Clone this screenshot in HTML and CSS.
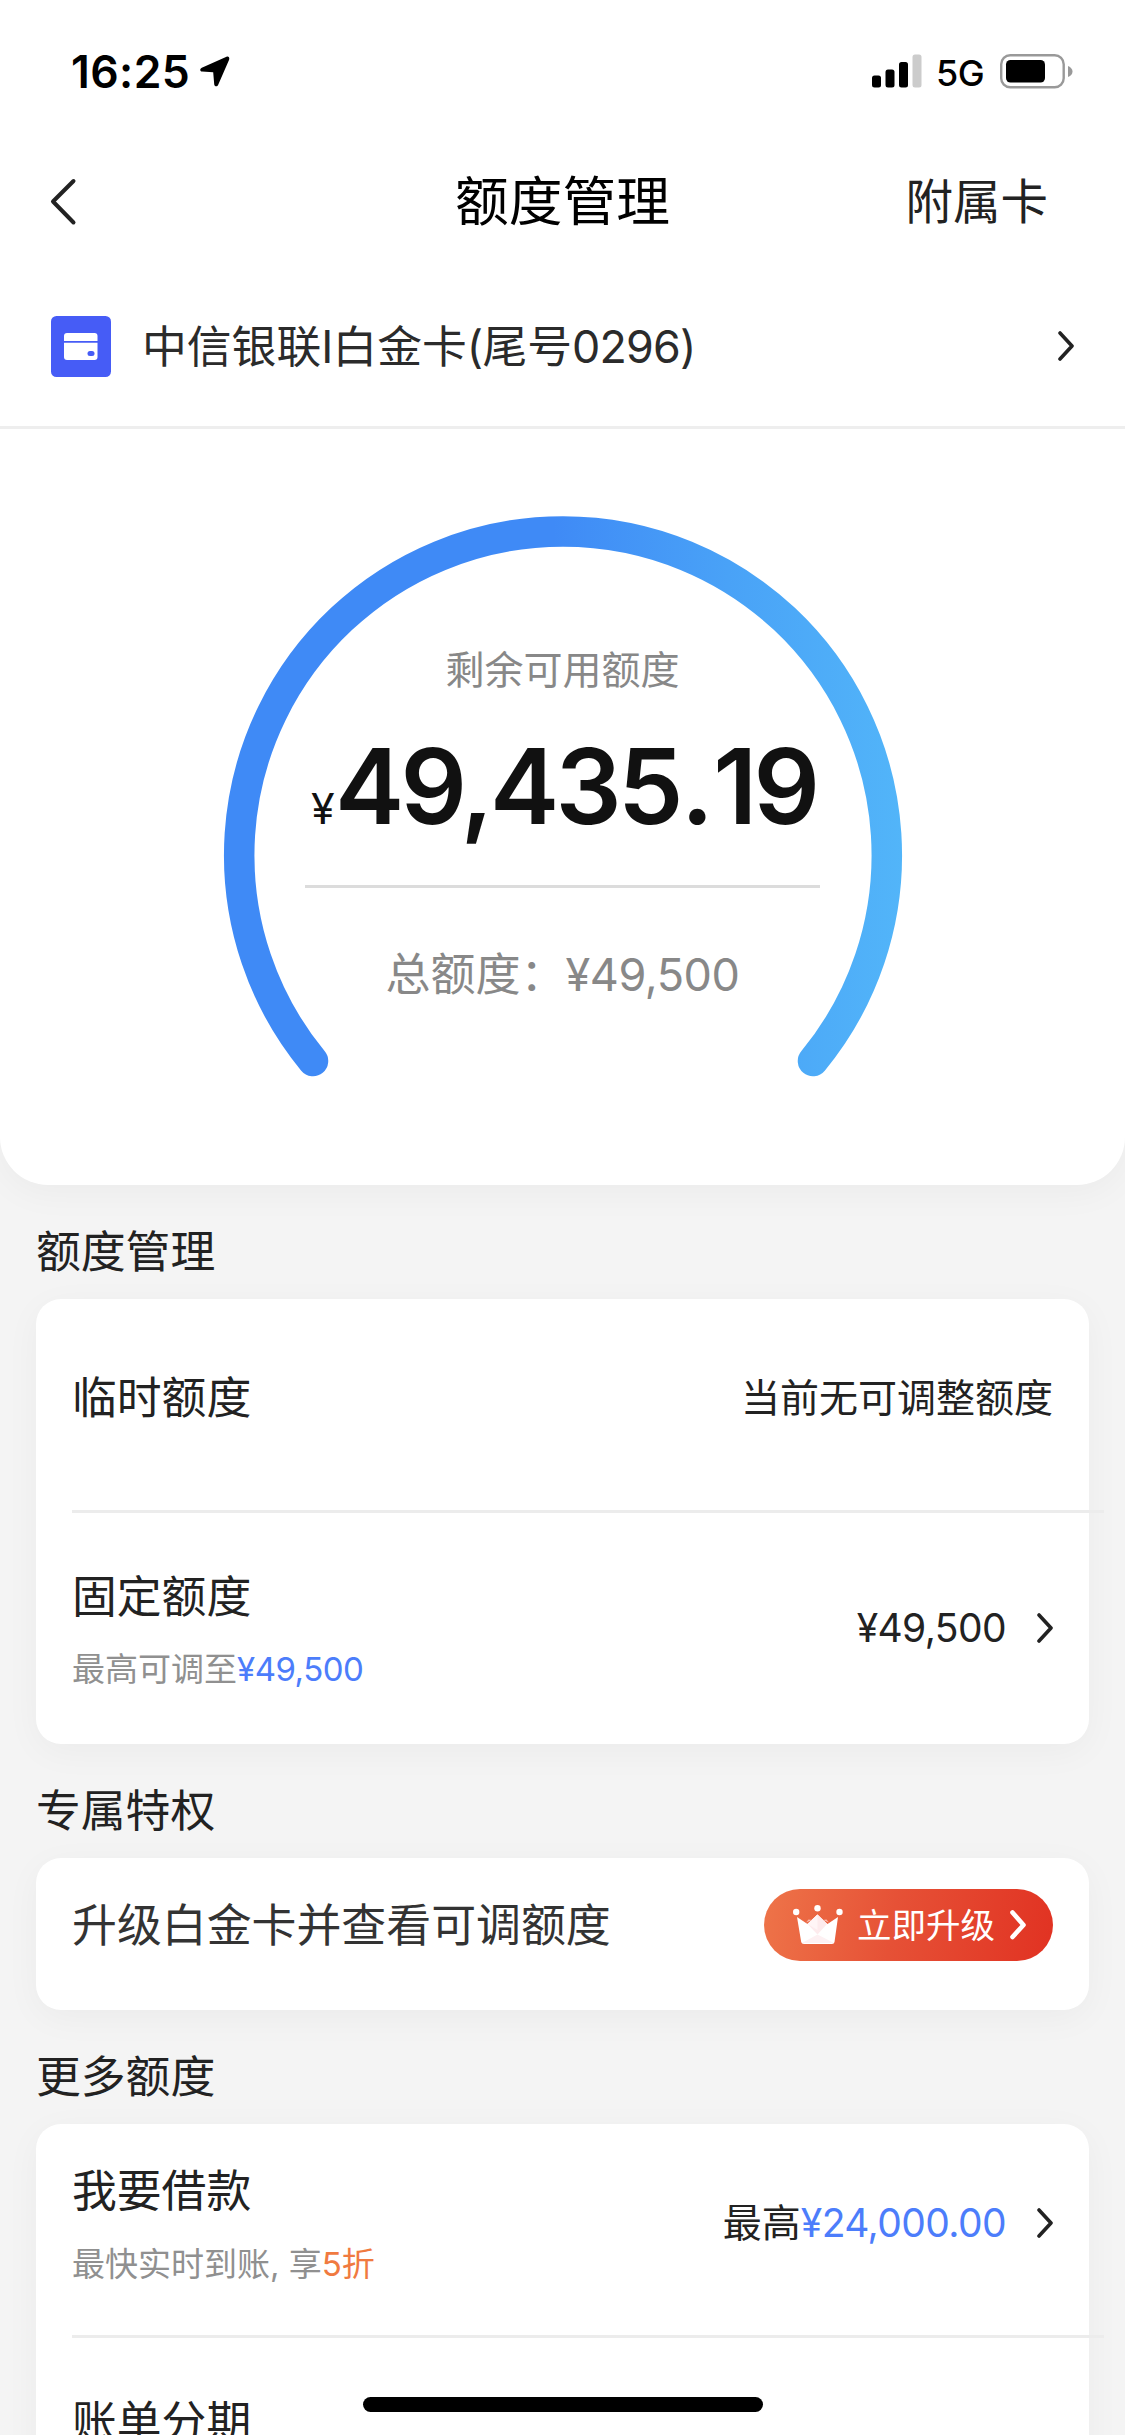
FILE: index.html
```html
<!DOCTYPE html>
<html lang="zh-CN">
<head>
<meta charset="utf-8">
<title>额度管理</title>
<link rel="stylesheet" href="styles.css">
</head>
<body>
<div class="screen">
  <section class="hero">
    <div class="status-bar">
      <div class="status-left">
        <span class="clock">16:25</span>
        <svg class="location" width="30" height="31" viewBox="0 0 30 31"><path d="M26.500 .8 1.800 11.800C-.4 12.900-.2 15.400 2 15.600L13.200 16.200 14.200 28.200C14.500 30.800 17.200 31 18.200 28.700L29 4C29.900 1.600 28.600 0 26.500 .8Z"/></svg>
      </div>
      <div class="status-right">
        <svg width="50" height="34" viewBox="0 0 50 34"><rect x="0" y="21.500" width="9" height="12" rx="2.500"/><rect x="13.500" y="15.500" width="9" height="18" rx="2.500"/><rect x="27" y="8" width="9" height="25.500" rx="2.500"/><rect x="40.500" y=".5" width="9" height="33" rx="2.500" fill="#ccc"/></svg>
        <span class="network">5G</span>
        <svg width="73" height="35" viewBox="0 0 73 35"><rect x="1.200" y="1.200" width="62.500" height="32" rx="9" fill="none" stroke="#999" stroke-width="2.400"/><rect x="6" y="6" width="39" height="22.500" rx="4.500"/><path d="M68 12Q72.500 14 72.500 17.500T68 23Z" fill="#999"/></svg>
      </div>
    </div>
    <header class="nav">
      <svg class="back" width="28" height="48" viewBox="0 0 28 48"><path d="M23.500 3 3 23.500 23.500 44.500"/></svg>
      <h1 class="nav-title">额度管理</h1>
      <span class="nav-action">附属卡</span>
    </header>
    <div class="account">
      <svg width="60" height="61" viewBox="0 0 60 61"><rect width="60" height="61" rx="5.500" fill="#465cf6"/><path d="M16 17H43.500Q46.500 17 46.500 20V25H13V20Q13 17 16 17Z" fill="#fff"/><path d="M13 26.800H46.500V41Q46.500 44 43.500 44H16Q13 44 13 41Z" fill="#fff"/><rect x="36.500" y="35" width="7" height="5" rx="2.500" fill="#465cf6"/></svg>
      <span class="account-name">中信银联<span class="num">I</span>白金卡<span class="num">(</span>尾号<span class="num">0296)</span></span>
      <svg class="chevron" width="16" height="30" viewBox="0 0 16 30"><path d="M2 2 14 15 2 28"/></svg>
    </div>
    <div class="gauge">
      <svg class="ring" width="680" height="562" viewBox="0 0 680 562">
        <defs><linearGradient id="ringFill" gradientUnits="userSpaceOnUse" x1="330" y1="0" x2="680" y2="0"><stop offset="0" stop-color="#3f8af6"/><stop offset=".5" stop-color="#49a2f7"/><stop offset="1" stop-color="#52b5f9"/></linearGradient></defs>
        <path d="M90 545A323.800 323.800 0 1 1 590 545" fill="none" stroke="url(#ringFill)" stroke-width="30.500" stroke-linecap="round"/>
      </svg>
      <div class="gauge-body">
        <div class="gauge-label">剩余可用额度</div>
        <div class="amount"><span class="yuan">¥</span><span class="figure">49,435<span class="point">.</span>19</span></div>
        <div class="gauge-total">总额度：<span class="num">¥49,500</span></div>
      </div>
    </div>
  </section>

  <main class="sections">
    <section class="group">
      <h2 class="group-title">额度管理</h2>
      <div class="card">
        <div class="row row-temp">
          <span class="row-title">临时额度</span>
          <span class="row-value">当前无可调整额度</span>
        </div>
        <div class="row row-fixed ruled">
          <div class="row-text">
            <span class="row-title">固定额度</span>
            <span class="row-note">最高可调至<span class="blue num">¥49,500</span></span>
          </div>
          <span class="row-value num">¥49,500</span>
          <svg class="chevron" width="16" height="30" viewBox="0 0 16 30"><path d="M2 2 14 15 2 28"/></svg>
        </div>
      </div>
    </section>

    <section class="group">
      <h2 class="group-title">专属特权</h2>
      <div class="card">
        <div class="row row-upgrade">
          <span class="upgrade-text">升级白金卡并查看可调额度</span>
          <span class="upgrade-button">
            <svg width="50" height="40" viewBox="0 0 50 40"><g fill="#fff"><circle cx="3.200" cy="7" r="3.200"/><circle cx="24.500" cy="3.200" r="3.200"/><circle cx="46.500" cy="7" r="3.200"/><path d="M4 12 14.500 19 24.500 9.500 34.500 19 45 12 41.500 37Q41.200 39 39 39H11Q8.500 39 8.200 37Z"/></g><path d="M24.500 9.500 34 19 24.500 29.500 14.500 19Z" fill="#fdebed"/><path d="M24.500 9.500 14.500 19 24.500 25Z" fill="#fff5f6"/><path d="M24.500 29.500 9 38H41Z" fill="#fdf0f2"/><path d="M13 17.500 15.500 14.500 19 15M30 15 33.500 14.500 36 17.500" fill="#f8b9ae"/></svg>
            <span class="upgrade-label">立即升级</span>
            <svg width="18" height="32" viewBox="0 0 18 32"><path d="M3.500 3.500 14.500 16 3.500 28" fill="none" stroke="#fff" stroke-width="4.600" stroke-linecap="round" stroke-linejoin="round"/></svg>
          </span>
        </div>
      </div>
    </section>

    <section class="group">
      <h2 class="group-title">更多额度</h2>
      <div class="card">
        <div class="row row-loan">
          <div class="row-text">
            <span class="row-title">我要借款</span>
            <span class="row-note">最快实时到账, 享<span class="orange">5折</span></span>
          </div>
          <span class="row-value">最高<span class="blue num">¥24,000.00</span></span>
          <svg class="chevron" width="16" height="30" viewBox="0 0 16 30"><path d="M2 2 14 15 2 28"/></svg>
        </div>
        <div class="row row-bill ruled">
          <span class="row-title">账单分期</span>
        </div>
      </div>
    </section>
  </main>
  <div class="home-indicator"></div>
</div>
</body>
</html>
```
FILE: styles.css
```css
* { box-sizing: border-box; }
body { margin: 0; background: #f4f4f4; }
svg { display: block; flex: none; }

.screen {
  position: relative;
  width: 1125px;
  height: 2435px;
  overflow: hidden;
  background: #f4f4f4;
  color: #222;
  font-family: Inter, "Noto Sans CJK SC", sans-serif;
  font-size: 44.8px;
  line-height: 60px;
  white-space: nowrap;
}
.num { letter-spacing: -.015em; }

.hero {
  height: 1185px;
  background: #fff;
  border-radius: 0 0 48px 48px;
  box-shadow: 0 8px 36px rgba(0, 0, 0, .04);
}

.status-bar {
  display: flex;
  justify-content: space-between;
  height: 144px;
  padding: 54px 52px 0 71px;
  color: #000;
}
.status-left, .status-right { display: flex; align-items: flex-start; }
.clock { width: 129px; font-size: 44.5px; line-height: 36px; font-weight: 600; letter-spacing: .4px; }
.location { margin-top: 2px; }
.network { width: 64px; margin-left: 14px; font-size: 36px; line-height: 38px; font-weight: 500; letter-spacing: -.5px; }

.nav {
  display: grid;
  grid-template-columns: 1fr auto 1fr;
  align-items: center;
  height: 116px;
  padding: 0 77px 0 50px;
}
.back path { fill: none; stroke: #222; stroke-width: 4; stroke-linecap: round; stroke-linejoin: round; }
.nav-title { margin: 0; padding-left: 27px; font-size: 53.7px; font-weight: 400; color: #000; }
.nav-action { justify-self: end; font-size: 47.5px; }

.account {
  display: flex;
  align-items: center;
  height: 169px;
  padding: 6px 51px 0 51px;
  border-bottom: 3px solid #eee;
}
.account-name { flex: 1; margin-left: 31px; padding-top: 2px; color: #2b2b2b; }
.account-name .num { letter-spacing: -.018em; }
.chevron path { fill: none; stroke: #222; stroke-width: 3.6; stroke-linecap: round; stroke-linejoin: round; }

.gauge { display: grid; justify-content: center; padding-top: 87px; }
.ring, .gauge-body { grid-area: 1 / 1; }
.gauge-body {
  justify-self: center;
  width: 515px;
  padding-top: 124px;
  text-align: center;
  color: #888;
}
.gauge-label { font-size: 39px; }
.amount {
  display: flex;
  align-items: baseline;
  height: 188px;
  padding: 26px 0 0 5px;
  border-bottom: 3px solid #dcdcdc;
  color: #111;
}
.yuan { width: 25px; font-size: 43px; line-height: 60px; letter-spacing: -.02em; }
.figure { font-size: 104px; line-height: 120px; font-weight: 600; letter-spacing: -3.7px; }
.point { margin: 0 3px 0 1px; }
.gauge-total { padding-top: 57px; font-size: 45px; }
.gauge-total .num { letter-spacing: -.01em; }

.sections { display: flex; flex-direction: column; padding: 0 36px; }
.group-title { margin: 0; height: 114px; padding-top: 37px; font-size: 44.8px; line-height: 60px; font-weight: 400; }
.card {
  background: #fff;
  border-radius: 25px;
  box-shadow: 0 8px 36px rgba(0, 0, 0, .04);
}
.row { position: relative; display: flex; align-items: center; padding: 0 36px; }
.ruled::before {
  content: "";
  position: absolute;
  top: 0;
  left: 36px;
  right: -15px;
  height: 3px;
  background: #ececec;
}
.row-text { display: flex; flex: 1; flex-direction: column; }
.row-title { flex: 1; }
.row-note { font-size: 33px; line-height: 50px; color: #909090; }
.row-value { font-size: 39px; }
.row .chevron { margin: 0 0 0 31px; }
.blue { color: #4c7dfb; }
.orange { color: #f07a40; }

.row-temp { height: 211px; padding-bottom: 13px; }
.row-fixed { height: 234px; padding-top: 2px; }
.row-fixed .row-text { padding-top: 5px; }
.row-fixed .row-note { margin-top: 17px; }
.row-loan .row-note { margin-top: 18px; }
.row-upgrade { height: 152px; padding-bottom: 19px; }
.upgrade-text { flex: 1; padding-top: 2px; font-size: 44.9px; color: #333; }
.upgrade-button {
  display: flex;
  align-items: center;
  width: 289px;
  height: 72px;
  padding: 0 26px 0 29px;
  border-radius: 36px;
  background: linear-gradient(100deg, #ee7449, #e65136 45%, #e13222);
  color: #fff;
}
.upgrade-label { flex: 1; padding: 2px 0 0 14px; font-size: 34.5px; }
.row-loan { height: 211px; padding-bottom: 13px; }
.row-loan .row-text { padding-top: 3px; }
.row-bill { height: 173px; }

.home-indicator {
  position: absolute;
  left: 363px;
  bottom: 23px;
  width: 400px;
  height: 15px;
  border-radius: 8px;
  background: #000;
}
```
